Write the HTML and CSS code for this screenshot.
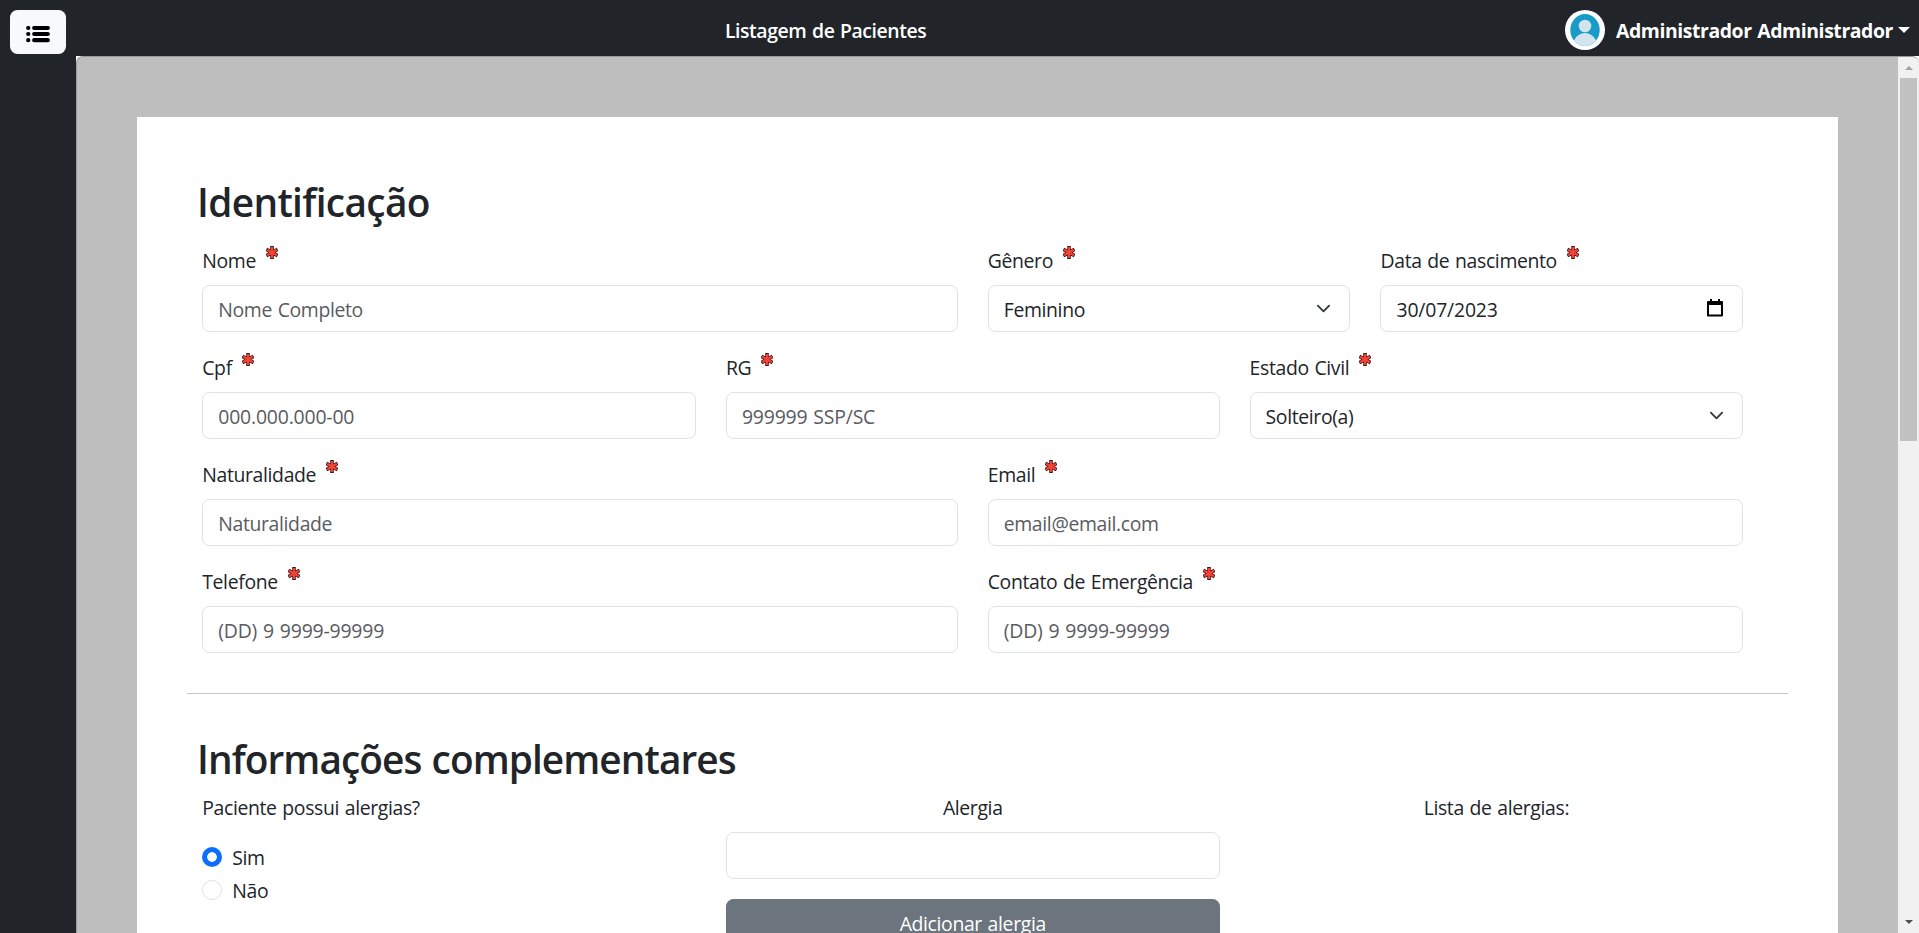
FILE: index.html
```html
<!DOCTYPE html>
<html lang="pt-BR">
<head>
<meta charset="utf-8">
<title>Listagem de Pacientes</title>
<link rel="stylesheet" href="styles.css">
</head>
<body>
<svg width="0" height="0" class="defs" aria-hidden="true">
  <symbol id="req" viewBox="0 0 12 13"><g fill="none"><path d="M6 0v13M.4 3.4l11.2 6.2M11.6 3.4L.4 9.6" stroke="#3b1a18" stroke-width="3.6"/><path d="M6 1v11M1.1 3.8l9.8 5.4M10.9 3.8l-9.8 5.4" stroke="#f44336" stroke-width="2.4"/></g></symbol>
  <symbol id="chevron" viewBox="0 0 16 16"><path d="m2 5 6 6 6-6" fill="none" stroke="#343a40" stroke-width="2" stroke-linecap="round" stroke-linejoin="round"/></symbol>
</svg>
<header class="topbar">
  <button class="menu" aria-label="Menu"><svg width="24" height="17" viewBox="0 0 24 17"><g stroke="#000" stroke-width="4.2" stroke-linecap="round"><path d="M2.2 2h.1M2.2 8h.1M2.2 14.2h.1M8.2 2h13.6M8.2 8h13.6M8.2 14.2h13.6"/></g></svg></button>
  <div class="title">Listagem de Pacientes</div>
  <div class="user">
    <svg class="avatar" width="40" height="40" viewBox="0 0 40 40"><defs><clipPath id="in"><ellipse cx="20" cy="20" rx="14.7" ry="16"/></clipPath></defs><circle cx="20" cy="20" r="20" fill="#fff"/><ellipse cx="20" cy="20" rx="14.7" ry="16" fill="#179bc9"/><circle cx="20" cy="16" r="6.3" fill="#d3e4ee"/><ellipse cx="20" cy="36" rx="12" ry="13" fill="#d3e4ee" clip-path="url(#in)"/></svg>
    <span class="name">Administrador Administrador</span><span class="caret"></span>
  </div>
</header>
<div class="body">
  <aside class="side"></aside>
  <main class="frame">
    <div class="scroll">
      <form class="card">
        <h1 class="heading h-id">Identificação</h1>
        <div class="grid">
          <div class="field c6"><label>Nome <svg class="req"><use href="#req"/></svg></label><div class="control ph">Nome Completo</div></div>
          <div class="field c3"><label>Gênero <svg class="req"><use href="#req"/></svg></label><div class="control">Feminino<svg class="chev"><use href="#chevron"/></svg></div></div>
          <div class="field c3"><label>Data de nascimento <svg class="req"><use href="#req"/></svg></label><div class="control num">30/07/2023<svg class="cal" viewBox="0 0 16 18"><path d="M1 3h14v13.5H1z" fill="none" stroke="#000" stroke-width="2" stroke-linejoin="round"/><path d="M1 2h14v4H1zM3 0h2v3H3zM11 0h2v3h-2z"/></svg></div></div>
          <div class="field c4"><label>Cpf <svg class="req"><use href="#req"/></svg></label><div class="control ph num">000.000.000-00</div></div>
          <div class="field c4"><label>RG <svg class="req"><use href="#req"/></svg></label><div class="control ph num">999999 SSP/SC</div></div>
          <div class="field c4"><label>Estado Civil <svg class="req"><use href="#req"/></svg></label><div class="control">Solteiro(a)<svg class="chev"><use href="#chevron"/></svg></div></div>
          <div class="field c6"><label>Naturalidade <svg class="req"><use href="#req"/></svg></label><div class="control ph">Naturalidade</div></div>
          <div class="field c6"><label>Email <svg class="req"><use href="#req"/></svg></label><div class="control ph">email@email.com</div></div>
          <div class="field c6"><label>Telefone <svg class="req"><use href="#req"/></svg></label><div class="control ph num">(DD) 9 9999-99999</div></div>
          <div class="field c6"><label>Contato de Emergência <svg class="req"><use href="#req"/></svg></label><div class="control ph num">(DD) 9 9999-99999</div></div>
        </div>
        <div class="rule"></div>
        <h2 class="heading h-info">Informações complementares</h2>
        <div class="grid info">
          <div class="c4">
            <div class="label">Paciente possui alergias?</div>
            <div class="radios">
              <div class="radio"><i class="dot on"></i><span>Sim</span></div>
              <div class="radio"><i class="dot"></i><span>Não</span></div>
            </div>
          </div>
          <div class="c4 center"><div class="label">Alergia</div><div class="control"></div><div class="btn">Adicionar alergia</div></div>
          <div class="c4 center"><div class="label">Lista de alergias:</div></div>
        </div>
      </form>
    </div>
    <div class="bar"><i class="up"></i><i class="thumb"></i><i class="down"></i></div>
  </main>
</div>
</body>
</html>
```
FILE: styles.css
```css
* { box-sizing: border-box; }
body { margin: 0; height: 933px; overflow: hidden; background: #fff; color: #212529; font: 19.4px/30px "Open Sans", sans-serif; letter-spacing: -0.35px; word-spacing: 1px; display: flex; flex-direction: column; }
.defs { position: absolute; }
.topbar { height: 56px; flex: none; background: #212529; color: #fff; display: grid; grid-template-columns: 725px 1fr auto; }
.menu { margin: 10px 0 0 10px; width: 56px; height: 44px; border: 0; border-radius: 7.5px; background: #f8f9fa; padding: 16px 0 0 16px; display: flex; }
.title { font-weight: 600; padding-top: 16px; letter-spacing: -0.42px; }
.user { display: flex; padding: 10px 9px 0 0; font-weight: 700; }
.name { margin-left: 11px; padding-top: 6px; letter-spacing: -0.4px; }
.caret { margin: 17px 0 0 5px; border: 6px solid transparent; border-top-color: #fff; border-bottom: 0; height: 6px; }
.body { display: flex; flex: 1; min-height: 0; }
.side { width: 76px; background: #212529; flex: none; }
.frame { flex: 1; display: flex; border: 1px solid #999; border-width: 1px 0 0 1px; border-radius: 7px 7px 0 0; overflow: hidden; background: #bebebe; }
.scroll { width: 1821px; padding: 60px; overflow: hidden; }
.card { background: #fff; width: 1701px; height: 1500px; padding: 60px 95px 0 65px; }
.heading { margin: 0 0 0 -5px; padding-top: 3px; font-weight: 600; font-size: 38.8px; line-height: 45px; letter-spacing: -0.65px; white-space: nowrap; }
.grid { display: grid; grid-template-columns: repeat(12, 1fr); column-gap: 30px; width: 1541px; margin-left: 0.25px; }
.c3 { grid-column: span 3; }
.c4 { grid-column: span 4; }
.c6 { grid-column: span 6; }
.field { height: 107px; padding-top: 21px; }
label { display: flex; height: 39px; }
.req { width: 12px; height: 13px; margin: 0 0 0 10px; }
.control { height: 47px; border: 1px solid #dee2e6; border-radius: 7.5px; padding: 9px 15px; display: flex; justify-content: space-between; }
.num { letter-spacing: -0.17px; }
.ph { color: #595c5f; }
.chev { width: 15px; height: 15px; margin: 6px 3px 0 0; }
.cal { width: 16px; height: 18px; margin: 4px 4px 0 0; }
.rule { height: 1px; background: #c7c8c9; width: 1601px; margin: 40px 0 0 -15px; }
.h-info { margin-top: 40px; letter-spacing: -0.93px; }
.info { padding-top: 11px; }
.label { height: 39px; }
.radios { margin-top: 11px; }
.radio { display: flex; gap: 10px; height: 33px; }
.dot { width: 20px; height: 20px; border: 1px solid #dee2e6; border-radius: 50%; margin-top: 4px; }
.dot.on { border: 0; background: radial-gradient(circle, #fff 4.4px, #0d6efd 5.2px); }
.center { text-align: center; }
.btn { margin-top: 20px; height: 47px; background: #6c757d; color: #fff; border-radius: 7.5px; padding-top: 10px; }
.bar { width: 21px; background: #f1f1f1; display: flex; flex-direction: column; align-items: center; }
.up { border: 4.5px solid transparent; border-bottom-color: #a3a3a3; border-top: 0; margin-top: 9px; }
.thumb { width: 17px; height: 363px; background: #c1c1c1; margin-top: 8px; }
.down { border: 4.5px solid transparent; border-top-color: #505050; border-bottom: 0; margin: auto 0 9px; }
```
